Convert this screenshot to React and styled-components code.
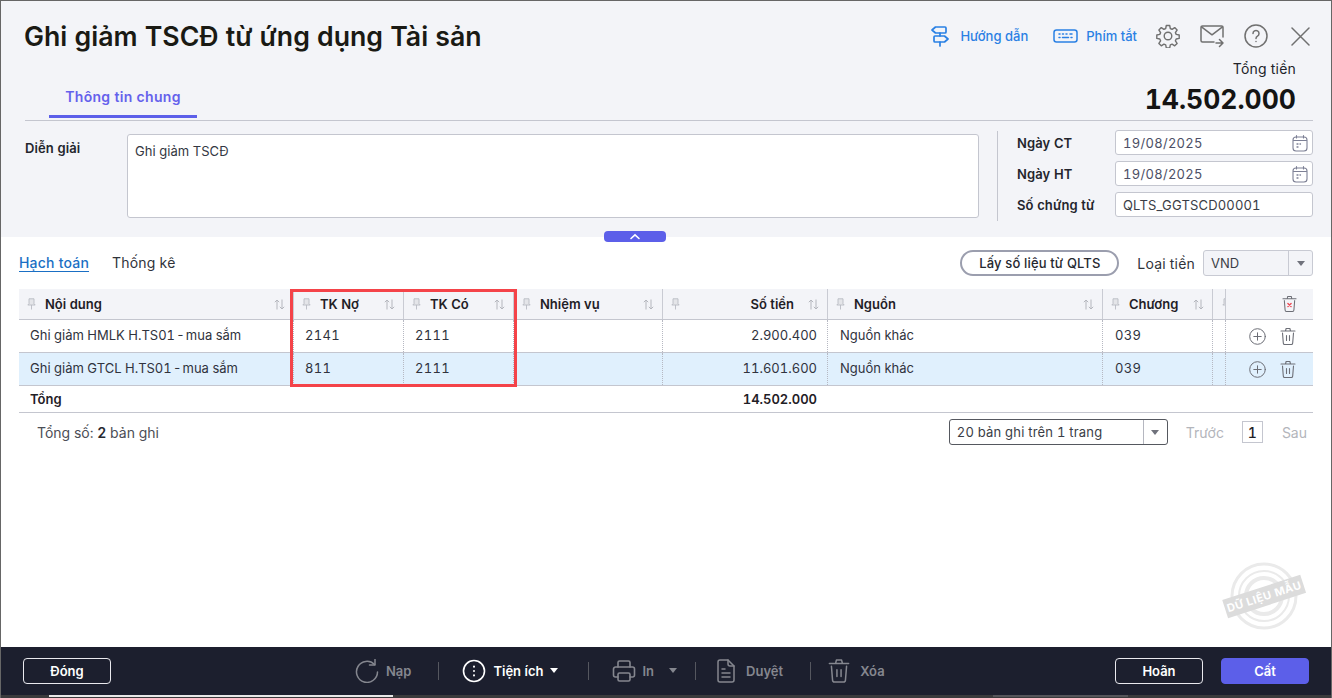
import React from 'react';
import styled, { createGlobalStyle } from 'styled-components';

const GlobalStyle = createGlobalStyle`
  html, body {
    margin: 0;
    padding: 0;
    background: #fff;
    overflow: hidden;
  }
  * {
    box-sizing: border-box;
  }
  body {
    font-family: Inter, "Noto Sans", "Liberation Sans", sans-serif;
    font-size: 13px;
    font-variant-numeric: tabular-nums;
    color: #1f2229;
  }
`;

const Page = styled.div`
  position: relative;
  width: 1332px;
  height: 698px;
  display: flex;
  flex-direction: column;
  border: 1px solid #666;
  border-width: 1px 1px 0 1px;
  background: #fff;
`;

const Head = styled.div`
  position: relative;
  height: 236px;
  flex: none;
  background: #f3f4f8;
`;

const TopBar = styled.div`
  height: 120px;
  margin: 0 18px 0 24px;
  border-bottom: 1px solid #c4c6cf;
  display: flex;
  justify-content: space-between;
`;

const TitleCol = styled.div`
  display: flex;
  flex-direction: column;
`;

const Title = styled.h1`
  margin: 19px 0 0 -1px;
  font-size: 26.7px;
  line-height: 32px;
  font-weight: 600;
  color: #1a1a14;
`;

const Tab = styled.div`
  margin: 29px 0 0 24px;
  width: 148px;
  height: 37px;
  padding-top: 6px;
  text-align: center;
  font-size: 14px;
  line-height: 20px;
  letter-spacing: 0.3px;
  font-weight: 600;
  color: #6561ec;
  border-bottom: 3px solid #5c5fe9;
`;

const ToolCol = styled.div`
  display: flex;
  flex-direction: column;
  align-items: flex-end;
`;

const Tools = styled.div`
  height: 24px;
  margin: 23px 3px 0 0;
  display: flex;
  align-items: center;
`;

const ToolLink = styled.div`
  display: flex;
  align-items: center;
  gap: ${(p) => p.$gap}px;
  margin-right: ${(p) => p.$right}px;
  font-size: 13px;
  font-weight: 500;
  color: #2a80e4;
`;

const IconBtn = styled.div`
  display: flex;
  margin-left: ${(p) => p.$left || 0}px;
  color: #707070;
`;

const TotalLabel = styled.div`
  margin: 11px 17px 0 0;
  font-size: 14px;
  line-height: 20px;
  letter-spacing: 0.2px;
  color: #22242a;
`;

const TotalValue = styled.div`
  margin: 3px 17px 0 0;
  font-size: 26.5px;
  line-height: 34px;
  font-weight: 700;
  color: #141414;
`;

const FormRow = styled.div`
  display: flex;
  padding: 9px 18px 0 24px;
`;

const FieldLabel = styled.label`
  font-size: 13px;
  font-weight: 600;
  letter-spacing: 0.1px;
  color: #23252c;
  width: ${(p) => p.$width}px;
  flex: none;
`;

const Memo = styled.div`
  width: 852px;
  height: 84px;
  margin-top: 4px;
  padding: 8px 7px;
  font-size: 13px;
  line-height: 16px;
  letter-spacing: 0.05px;
  background: #fff;
  border: 1px solid #c4c6cf;
  border-radius: 3px;
  color: #333742;
`;

const MemoLabel = styled(FieldLabel)`
  margin-top: 10px;
  line-height: 16px;
`;

const VDivider = styled.div`
  width: 1px;
  height: 90px;
  margin: 1px 19px 0 18px;
  background: #c4c6cf;
`;

const DateCol = styled.div`
  display: flex;
  flex-direction: column;
  gap: 6px;
`;

const DateRow = styled.div`
  display: flex;
  align-items: center;
  height: 25px;
`;

const DateInput = styled.div`
  width: 198px;
  height: 25px;
  padding: 0 4px 0 7px;
  display: flex;
  align-items: center;
  justify-content: space-between;
  background: #fff;
  border: 1px solid #c4c6cf;
  border-radius: 3px;
  font-size: 13px;
  letter-spacing: ${(p) => (p.$code ? '0.17px' : '0.3px')};
  color: ${(p) => (p.$code ? '#3a3d46' : '#4d5066')};
`;

const Collapse = styled.div`
  position: absolute;
  left: 603px;
  bottom: -5px;
  width: 62px;
  height: 11px;
  display: flex;
  align-items: center;
  justify-content: center;
  background: #5c5fe9;
  border-radius: 4px;
  color: #fff;
`;

const Body = styled.div`
  flex: 1;
  padding: 13px 18px 0;
  position: relative;
`;

const SubBar = styled.div`
  height: 26px;
  display: flex;
  align-items: center;
`;

const SubTab = styled.div`
  font-size: 14px;
  line-height: 24px;
  letter-spacing: 0.2px;
  margin-right: ${(p) => p.$right}px;
  color: ${(p) => (p.$active ? '#1a6fc4' : '#30333a')};
  text-decoration: ${(p) => (p.$active ? 'underline' : 'none')};
  text-underline-offset: 3px;
  font-weight: ${(p) => (p.$active ? 500 : 400)};
`;

const Spacer = styled.div`
  flex: 1;
`;

const FetchBtn = styled.div`
  width: 159px;
  height: 26px;
  display: flex;
  align-items: center;
  justify-content: center;
  border: 2px solid #9b9eae;
  border-radius: 13px;
  font-size: 13px;
  letter-spacing: 0.15px;
  font-weight: 500;
  color: #26282f;
`;

const CurrencyLabel = styled.div`
  margin: 0 8px 0 18px;
  font-size: 14px;
  letter-spacing: 0.2px;
  color: #30333a;
`;

const SelectBox = styled.div`
  width: ${(p) => p.$width}px;
  height: 26px;
  display: flex;
  align-items: center;
  background: ${(p) => (p.$dark ? '#fff' : '#f3f4f8')};
  border: 1px solid ${(p) => (p.$dark ? '#55585f' : '#c8cad3')};
  border-radius: 3px;
  font-size: 13px;
  color: #3a3d46;
`;

const SelectText = styled.div`
  flex: 1;
  padding-left: 7px;
  letter-spacing: ${(p) => (p.$dark ? '0.2px' : '0')};
`;

const SelectArrow = styled.div`
  width: 24px;
  height: 100%;
  display: flex;
  align-items: center;
  justify-content: center;
  border-left: 1px solid ${(p) => (p.$dark ? '#b5b7c0' : '#c8cad3')};
  &::after {
    content: "";
    border-style: solid;
    border-width: 5px 4.5px 0;
    border-color: #70727c transparent transparent;
  }
`;

const Table = styled.div`
  position: relative;
  margin-top: 13px;
`;

const Row = styled.div`
  display: grid;
  grid-template-columns: 274px 110px 110px 149px 165px 275px 110px 13px 88px;
  height: ${(p) => p.$height}px;
  background: ${(p) => p.$bg || '#fff'};
  border-bottom: 1px solid #c4c6cf;
`;

const HeadCell = styled.div`
  display: flex;
  align-items: center;
  padding: 0 ${(p) => (p.$tight ? 0 : 8)}px 0 ${(p) => (p.$tight ? 9 : 8)}px;
  border-left: ${(p) => (p.$first ? 'none' : '1px solid #c9cbd3')};
  font-size: 13px;
  font-weight: 600;
  color: #1f2026;
  overflow: hidden;
`;

const HeadText = styled.span`
  flex: ${(p) => (p.$right ? 1 : 'none')};
  margin-left: 9px;
  text-align: ${(p) => (p.$right ? 'right' : 'left')};
  margin-right: ${(p) => (p.$right ? 14 : 0)}px;
`;

const Cell = styled.div`
  display: flex;
  align-items: center;
  justify-content: ${(p) => (p.$right ? 'flex-end' : 'flex-start')};
  padding: ${(p) => (p.$right ? '0 10px 2px 0' : `0 0 2px ${p.$pad || 11}px`)};
  border-left: ${(p) => (p.$first ? 'none' : '1px dotted #b6b8c2')};
  font-size: 13px;
  letter-spacing: ${(p) => (p.$num ? '0.3px' : '0')};
  color: #30333d;
  white-space: nowrap;
`;

const ActionCell = styled(Cell)`
  padding: 0 17px 0 0;
  justify-content: flex-end;
  gap: 14px;
  color: #6c6e76;
`;

const TrashHead = styled(HeadCell)`
  justify-content: flex-end;
  padding: 0 16px 0 0;
  color: #6c6e76;
`;

const TotalRow = styled(Row)`
  height: 27px;
  background: #fff;
`;

const TotalCell = styled.div`
  display: flex;
  align-items: center;
  justify-content: ${(p) => (p.$right ? 'flex-end' : 'flex-start')};
  padding: ${(p) => (p.$right ? '0 10px 0 0' : '0 0 0 11px')};
  font-weight: 600;
  font-size: 13px;
  color: #1f2026;
`;

const Highlight = styled.div`
  position: absolute;
  left: 271px;
  top: 0;
  width: 227px;
  height: 98px;
  border: 3px solid #f44349;
  pointer-events: none;
`;

const Pager = styled.div`
  height: 38px;
  padding: 0 6px 0 18px;
  display: flex;
  align-items: center;
  font-size: 14px;
  color: #4c4e56;
`;

const PagerTotal = styled.div`
  b {
    font-weight: 600;
    color: #26282f;
  }
`;

const PagerLink = styled.div`
  margin: ${(p) => p.$margin};
  color: #b3b5bb;
`;

const PageNum = styled.div`
  width: 21px;
  height: 22px;
  display: flex;
  align-items: center;
  justify-content: center;
  border: 1px solid #c4c6cf;
  font-weight: 500;
  color: #1f2026;
`;

const Stamp = styled.svg`
  position: absolute;
  left: 1219px;
  top: 559px;
`;

const Footer = styled.div`
  height: 48px;
  flex: none;
  display: flex;
  align-items: center;
  padding: 0 22px;
  background: #1c1f2e;
  color: #fff;
`;

const OutlineBtn = styled.div`
  width: 88px;
  height: 26px;
  display: flex;
  align-items: center;
  justify-content: center;
  border: 1px solid #e9e9ee;
  border-radius: 4px;
  font-size: 13px;
  font-weight: 600;
`;

const SaveBtn = styled(OutlineBtn)`
  margin-left: 18px;
  background: #5c5fe9;
  border-color: #5c5fe9;
`;

const Actions = styled.div`
  flex: 1;
  display: flex;
  align-items: center;
  padding-left: 244px;
`;

const Action = styled.div`
  display: flex;
  align-items: center;
  gap: ${(p) => p.$gap}px;
  font-size: 13px;
  font-weight: 600;
  color: ${(p) => (p.$on ? '#fff' : '#85878f')};
`;

const Sep = styled.div`
  width: 1px;
  height: 18px;
  margin: ${(p) => p.$margin};
  background: #55575f;
`;

const Caret = styled.span`
  display: inline-block;
  margin-left: ${(p) => p.$left}px;
  border-style: solid;
  border-width: 5px 4.5px 0;
  border-color: ${(p) => (p.$on ? '#fff' : '#85878f')} transparent transparent;
`;

const ScrollStrip = styled.div`
  height: 3px;
  flex: none;
  display: flex;
  background: #3a3a3c;
`;

const ScrollThumb = styled.div`
  height: 2px;
  width: ${(p) => p.$width}px;
  margin-left: ${(p) => p.$left}px;
  background: ${(p) => p.$color};
`;

const Svg = ({ size = 16, h, sw = 1.3, children, vb }) => (
  <svg
    width={size}
    height={h || size}
    viewBox={vb || `0 0 ${size} ${h || size}`}
    fill="none"
    stroke="currentColor"
    strokeWidth={sw}
    strokeLinecap="round"
    strokeLinejoin="round"
  >
    {children}
  </svg>
);

const SignIcon = () => (
  <Svg size={18} h={22} sw={1.7}>
    <path d="M4.500 2H14a1 1 0 0 1 1 1v4a1 1 0 0 1-1 1H4.500L1 5z" />
    <path d="M4 11h9.500L17 14l-3.500 3H4a1 1 0 0 1-1-1v-4a1 1 0 0 1 1-1z" />
    <path d="M9 8v3M9 17v4" />
  </Svg>
);

const KeyboardIcon = () => (
  <Svg size={25} h={14} sw={1.5}>
    <rect x="1" y="1" width="23" height="12" rx="2.500" />
    <path d="M6 5h1M9.500 5h1M13 5h1M17 5h2M6 8.500h1M9.500 8.500h6M18 8.500h1" />
  </Svg>
);

const GearIcon = () => (
  <Svg size={24} sw={1.4}>
    <path d="M10.300 1.500h3.400l.6 3 1.800.8 2.600-1.700 2.400 2.400-1.700 2.600.8 1.800 3 .6v3.400l-3 .6-.8 1.800 1.700 2.600-2.400 2.400-2.600-1.700-1.800.8-.6 3h-3.400l-.6-3-1.800-.8-2.600 1.700-2.400-2.400 1.700-2.600-.8-1.800-3-.6v-3.400l3-.6.8-1.800-1.700-2.600 2.400-2.400 2.600 1.700 1.800-.8z" />
    <circle cx="12" cy="12" r="3.800" />
  </Svg>
);

const MailIcon = () => (
  <Svg size={24} h={23} sw={1.5}>
    <path d="M14 17H2.500A1.500 1.500 0 0 1 1 15.500V2.500A1.500 1.500 0 0 1 2.500 1h19A1.500 1.500 0 0 1 23 2.500V12" />
    <path d="M1.500 1.800l10.500 8 10.500-8" />
    <path d="M16 18h7M19.500 14.500l3.500 3.500-3.500 3.500" />
  </Svg>
);

const HelpIcon = () => (
  <Svg size={24} sw={1.5}>
    <circle cx="12" cy="12" r="11" />
    <path d="M9 9.500a3 3 0 1 1 4.500 2.600c-1 .6-1.500 1.200-1.500 2.400" />
    <path d="M12 17.500v.1" />
  </Svg>
);

const CloseIcon = () => (
  <Svg size={19} sw={1.5}>
    <path d="M1 1l17 17M18 1L1 18" />
  </Svg>
);

const CalendarIcon = () => (
  <svg width="16" height="18" viewBox="0 0 16 18" fill="none" stroke="#7d8095" strokeWidth="1.1" strokeLinecap="round">
    <rect x="1" y="3" width="14" height="14" rx="3" />
    <path d="M1.500 6.500h13M4.500 1.500v2.500M11.500 1.500v2.500" />
    <path d="M5 10h1M8 10h.5M5 13h1" strokeWidth="1.300" />
  </svg>
);

const PinIcon = () => (
  <svg width="9" height="12" viewBox="0 0 9 12" fill="#e4e5e9" stroke="#b9bbc3" strokeWidth="0.9" style={{ flex: 'none' }}>
    <path d="M2 .8h5v5l1.200 1.200H.8L2 5.800z" />
    <path d="M4.500 7v4.500" />
  </svg>
);

const SortIcon = () => (
  <svg width="11" height="11" viewBox="0 0 11 11" fill="none" stroke="#b4b6bd" strokeWidth="1" style={{ flex: 'none' }}>
    <path d="M3 10.500V1M.8 3.200L3 1l2.200 2.200M8 .5V10M5.800 7.800L8 10l2.200-2.200" />
  </svg>
);

const TrashIcon = ({ size = 16, sw = 1.1, x }) => (
  <svg width={size} height={size * 1.15} viewBox="0 0 16 18.400" fill="none" stroke="currentColor" strokeWidth={sw} strokeLinecap="round" strokeLinejoin="round">
    <path d="M1 4h14M5.500 4l.6-2.500h3.800l.6 2.500" />
    <path d="M2.500 6l.8 10a1.500 1.500 0 0 0 1.500 1.500h6.400a1.500 1.500 0 0 0 1.500-1.500l.8-10" />
    {x ? (
      <path d="M6.300 9l3.400 3.400M9.700 9l-3.400 3.400" stroke="#ee4a55" strokeWidth="1.500" />
    ) : (
      <path d="M6.500 8.500v5M9.500 8.500v5" />
    )}
  </svg>
);

const PlusIcon = () => (
  <Svg size={17} sw={1}>
    <circle cx="8.500" cy="8.500" r="7.800" />
    <path d="M8.500 4.800v7.400M4.800 8.500h7.400" />
  </Svg>
);

const ReloadIcon = () => (
  <Svg size={24} sw={1.5}>
    <path d="M19.500 5.500A10.500 10.500 0 1 0 22.500 13" />
    <path d="M20 .5v5.500h-5.500" />
  </Svg>
);

const MoreIcon = () => (
  <Svg size={24} sw={1.6}>
    <circle cx="12" cy="12" r="10.500" />
    <path d="M12 7.500v.2M12 11.900v.2M12 16.300v.2" strokeWidth="2" />
  </Svg>
);

const PrintIcon = () => (
  <Svg size={24} sw={1.6}>
    <path d="M6 8V3.500A1.500 1.500 0 0 1 7.500 2h9A1.500 1.500 0 0 1 18 3.500V8" />
    <path d="M6 18H3.500A2 2 0 0 1 1.500 16v-6a2 2 0 0 1 2-2h17a2 2 0 0 1 2 2v6a2 2 0 0 1-2 2H18" />
    <rect x="6" y="14" width="12" height="8" rx="1.500" />
  </Svg>
);

const DocIcon = () => (
  <Svg size={18} h={24} sw={1.5}>
    <path d="M11 1H3a2 2 0 0 0-2 2v18a2 2 0 0 0 2 2h12a2 2 0 0 0 2-2V7z" />
    <path d="M11 1v4a2 2 0 0 0 2 2h4" />
    <path d="M5 10h3M5 14h8M5 18h8" />
  </Svg>
);

const SortedHead = ({ title, right, first }) => (
  <HeadCell $first={first}>
    <PinIcon />
    <HeadText $right={right}>{title}</HeadText>
    {!right && <Spacer />}
    <SortIcon />
  </HeadCell>
);

const rows = [
  { name: 'Ghi giảm HMLK H.TS01\u200a-\u200amua sắm', debit: '2141', credit: '2111', amount: '2.900.400' },
  { name: 'Ghi giảm GTCL H.TS01\u200a-\u200amua sắm', debit: '811', credit: '2111', amount: '11.601.600', bg: '#e0f0fd' },
];

export default function App() {
  return (
    <Page>
      <GlobalStyle />
      <Head>
        <TopBar>
          <TitleCol>
            <Title>Ghi giảm TSCĐ từ ứng dụng Tài sản</Title>
            <Tab>Thông tin chung</Tab>
          </TitleCol>
          <ToolCol>
            <Tools>
              <ToolLink $gap={11} $right={25}><SignIcon />Hướng dẫn</ToolLink>
              <ToolLink $gap={8} $right={0}><KeyboardIcon />Phím tắt</ToolLink>
              <IconBtn $left={19}><GearIcon /></IconBtn>
              <IconBtn $left={20}><MailIcon /></IconBtn>
              <IconBtn $left={20}><HelpIcon /></IconBtn>
              <IconBtn $left={23}><CloseIcon /></IconBtn>
            </Tools>
            <TotalLabel>Tổng tiền</TotalLabel>
            <TotalValue>14.502.000</TotalValue>
          </ToolCol>
        </TopBar>
        <FormRow>
          <MemoLabel $width={102}>Diễn giải</MemoLabel>
          <Memo>Ghi giảm TSCĐ</Memo>
          <VDivider />
          <DateCol>
            <DateRow>
              <FieldLabel $width={98}>Ngày CT</FieldLabel>
              <DateInput>19/08/2025<CalendarIcon /></DateInput>
            </DateRow>
            <DateRow>
              <FieldLabel $width={98}>Ngày HT</FieldLabel>
              <DateInput>19/08/2025<CalendarIcon /></DateInput>
            </DateRow>
            <DateRow>
              <FieldLabel $width={98}>Số chứng từ</FieldLabel>
              <DateInput $code>QLTS_GGTSCD00001</DateInput>
            </DateRow>
          </DateCol>
        </FormRow>
        <Collapse>
          <svg width="12" height="7" viewBox="0 0 12 7" fill="none" stroke="currentColor" strokeWidth="1.6" strokeLinecap="round">
            <path d="M2 5.500L6 1.800l4 3.700" />
          </svg>
        </Collapse>
      </Head>
      <Body>
        <SubBar>
          <SubTab $active $right={23}>Hạch toán</SubTab>
          <SubTab $right={0}>Thống kê</SubTab>
          <Spacer />
          <FetchBtn>Lấy số liệu từ QLTS</FetchBtn>
          <CurrencyLabel>Loại tiền</CurrencyLabel>
          <SelectBox $width={110}>
            <SelectText>VND</SelectText>
            <SelectArrow />
          </SelectBox>
        </SubBar>
        <Table>
          <Row $height={31} $bg="#f3f4f8">
            <SortedHead first title="Nội dung" />
            <SortedHead title="TK Nợ" />
            <SortedHead title="TK Có" />
            <SortedHead title="Nhiệm vụ" />
            <SortedHead title="Số tiền" right />
            <SortedHead title="Nguồn" />
            <SortedHead title="Chương" />
            <HeadCell $tight><PinIcon /></HeadCell>
            <TrashHead><TrashIcon x size={15} /></TrashHead>
          </Row>
          {rows.map((r) => (
            <Row key={r.name} $height={33} $bg={r.bg}>
              <Cell $first>{r.name}</Cell>
              <Cell $num>{r.debit}</Cell>
              <Cell $num>{r.credit}</Cell>
              <Cell />
              <Cell $right>{r.amount}</Cell>
              <Cell $pad={12}>Nguồn khác</Cell>
              <Cell $num $pad={12}>039</Cell>
              <Cell />
              <ActionCell>
                <PlusIcon />
                <TrashIcon size={16} />
              </ActionCell>
            </Row>
          ))}
          <TotalRow>
            <TotalCell>Tổng</TotalCell>
            <div />
            <div />
            <div />
            <TotalCell $right>14.502.000</TotalCell>
          </TotalRow>
          <Highlight />
        </Table>
        <Pager>
          <PagerTotal>Tổng số: <b>2</b> bản ghi</PagerTotal>
          <Spacer />
          <SelectBox $width={219} $dark>
            <SelectText $dark>20 bản ghi trên 1 trang</SelectText>
            <SelectArrow $dark />
          </SelectBox>
          <PagerLink $margin="0 18px 0 18px">Trước</PagerLink>
          <PageNum>1</PageNum>
          <PagerLink $margin="0 0 0 19px">Sau</PagerLink>
        </Pager>
      </Body>
      <Stamp width="88" height="72" viewBox="0 0 88 72" fill="none">
        <g stroke="#eaeaea">
          <circle cx="44" cy="36" r="32" strokeWidth="3" />
          <circle cx="44" cy="36" r="25" strokeWidth="2" />
          <circle cx="44" cy="36" r="18" strokeWidth="4" />
        </g>
        <g transform="rotate(-18 44 36)">
          <rect x="3" y="27" width="82" height="19" fill="#dcdcdc" />
          <text x="44" y="40.500" textAnchor="middle" fontFamily="Inter, sans-serif" fontSize="11" fontWeight="700" letterSpacing="0.5" fill="#fff">DỮ LIỆU MẪU</text>
        </g>
      </Stamp>
      <Footer>
        <OutlineBtn>Đóng</OutlineBtn>
        <Actions>
          <Action $gap={7}><ReloadIcon />Nạp</Action>
          <Sep $margin="0 23px 0 27px" />
          <Action $on $gap={7}><MoreIcon />Tiện ích<Caret $on $left={-1} /></Action>
          <Sep $margin="0 23px 0 30px" />
          <Action $gap={7}><PrintIcon />In<Caret $left={8} /></Action>
          <Sep $margin="0 21px 0 18px" />
          <Action $gap={11}><DocIcon />Duyệt</Action>
          <Sep $margin="0 17px 0 27px" />
          <Action $gap={10}><TrashIcon size={22} sw={1.1} />Xóa</Action>
        </Actions>
        <OutlineBtn>Hoãn</OutlineBtn>
        <SaveBtn>Cất</SaveBtn>
      </Footer>
      <ScrollStrip>
        <ScrollThumb $left={48} $width={344} $color="#e8e8e8" />
        <ScrollThumb $left={600} $width={135} $color="#55555a" />
      </ScrollStrip>
    </Page>
  );
}
